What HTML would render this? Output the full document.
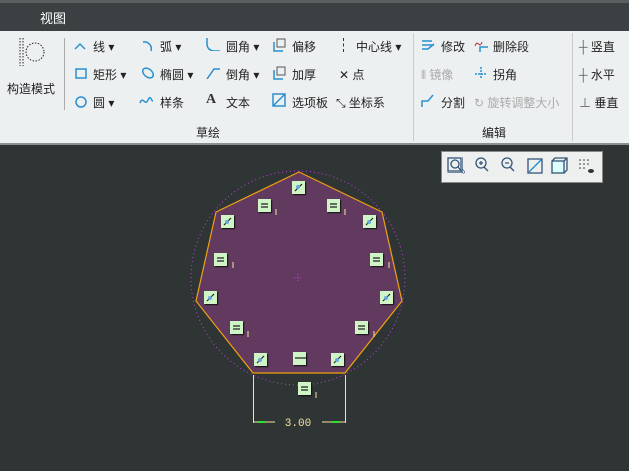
<!DOCTYPE html><html><head><meta charset="utf-8"><style>
body{margin:0;width:629px;height:471px;overflow:hidden;background:#2f3434;font-family:"Liberation Sans","Noto Sans CJK SC",sans-serif;position:relative}
.a{position:absolute;white-space:nowrap}
.t{font-size:12px;color:#222}
.g{color:#aaa}
.ic{position:absolute;width:14px;height:14px}
.m{position:absolute;width:13px;height:13px;background:#cff5c6;box-shadow:1px 1px 1px #111}
</style></head><body>
<div class="a" style="left:0;top:0;width:629px;height:3px;background:#5a5f60"></div>
<div class="a" style="left:0;top:3px;width:629px;height:28px;background:#3b4142"></div>
<div class="a" style="left:40px;top:8px;font-size:13px;color:#fff">视图</div>
<div class="a" style="left:0;top:31px;width:629px;height:112px;background:#edf0f1;border-bottom:2px solid #8a8f90"></div>
<svg class="a" style="left:18px;top:37px" width="30" height="30"><g fill="none" stroke="#222" stroke-dasharray="1.5 1.5"><line x1="2" y1="1" x2="2" y2="29"/><line x1="5" y1="1" x2="5" y2="29"/><circle cx="17" cy="15" r="9"/></g></svg>
<div class="a t" style="left:7px;top:80px">构造模式</div>
<div class="a" style="left:64px;top:38px;width:1px;height:72px;background:#aaa"></div>
<div class="a" style="left:413px;top:33px;width:1px;height:108px;background:#ccc"></div>
<div class="a" style="left:572px;top:33px;width:1px;height:108px;background:#ccc"></div>
<!-- col1 -->
<svg class="ic" style="left:74px;top:39px"><path d="M1 10l5-5 5 5" stroke="#2a8fd0" stroke-width="1.5" fill="none"/></svg><div class="a t" style="left:93px;top:38px">线 ▾</div>
<svg class="ic" style="left:74px;top:66px"><rect x="2" y="3" width="10" height="9" stroke="#2a8fd0" stroke-width="1.5" fill="none"/></svg><div class="a t" style="left:93px;top:66px">矩形 ▾</div>
<svg class="ic" style="left:74px;top:94px"><circle cx="7" cy="8" r="5" stroke="#2a8fd0" stroke-width="1.5" fill="none"/></svg><div class="a t" style="left:93px;top:94px">圆 ▾</div>
<svg class="ic" style="left:141px;top:39px"><path d="M2 3a7 7 0 0 1 8 9" stroke="#2a8fd0" stroke-width="1.5" fill="none"/></svg><div class="a t" style="left:160px;top:38px">弧 ▾</div>
<svg class="ic" style="left:141px;top:66px"><ellipse cx="7" cy="7" rx="6" ry="4" transform="rotate(40 7 7)" stroke="#2a8fd0" stroke-width="1.5" fill="none"/></svg><div class="a t" style="left:160px;top:66px">椭圆 ▾</div>
<svg class="ic" style="left:139px;top:94px"><path d="M1 9c3-8 5 4 8-3s4 4 5 0" stroke="#2a8fd0" stroke-width="1.5" fill="none"/></svg><div class="a t" style="left:160px;top:94px">样条</div>
<svg class="ic" style="left:206px;top:37px"><path d="M1 1v6a7 7 0 0 0 7 7h6" stroke="#2a8fd0" stroke-width="1.5" fill="none"/></svg><div class="a t" style="left:226px;top:38px">圆角 ▾</div>
<svg class="ic" style="left:206px;top:65px"><path d="M1 14l7-10h6" stroke="#2a8fd0" stroke-width="1.5" fill="none"/></svg><div class="a t" style="left:226px;top:66px">倒角 ▾</div>
<div class="a" style="left:206px;top:92px;font:bold 14px 'Liberation Serif',serif;color:#333">A</div><div class="a t" style="left:226px;top:94px">文本</div>
<svg class="ic" style="left:272px;top:38px"><path d="M2 4v9h9" stroke="#2a8fd0" stroke-width="1.5" fill="none"/><rect x="5" y="1" width="8" height="8" stroke="#555" fill="none"/></svg><div class="a t" style="left:292px;top:38px">偏移</div>
<svg class="ic" style="left:272px;top:66px"><path d="M2 4v9h9" stroke="#2a8fd0" stroke-width="1.5" fill="none"/><rect x="5" y="1" width="8" height="8" stroke="#555" fill="none"/></svg><div class="a t" style="left:292px;top:66px">加厚</div>
<svg class="ic" style="left:272px;top:93px"><rect x="1" y="1" width="12" height="12" stroke="#2a8fd0" stroke-width="1.5" fill="none"/><path d="M1 13L13 1" stroke="#2a8fd0" stroke-width="1.5"/></svg><div class="a t" style="left:292px;top:94px">选项板</div>
<div class="a" style="left:343px;top:38px;width:1px;height:14px;border-left:1px dashed #333"></div><div class="a t" style="left:356px;top:38px">中心线 ▾</div>
<div class="a t" style="left:339px;top:66px">✕ 点</div>
<div class="a t" style="left:336px;top:94px">⤡ 坐标系</div>
<div class="a t" style="left:196px;top:124px">草绘</div>
<!-- edit -->
<svg class="ic" style="left:421px;top:38px"><path d="M1 3h10M1 7h12M1 11h6l6-5" stroke="#2a8fd0" stroke-width="1.5" fill="none"/></svg><div class="a t" style="left:441px;top:38px">修改</div>
<div class="a t g" style="left:421px;top:66px">⫴ 镜像</div>
<svg class="ic" style="left:421px;top:93px"><path d="M1 14V8h6l5-6" stroke="#2a8fd0" stroke-width="1.5" fill="none"/></svg><div class="a t" style="left:441px;top:94px">分割</div>
<svg class="ic" style="left:474px;top:38px"><path d="M1 8c3-8 4 4 7-4" stroke="#a33" fill="none"/><path d="M6 14V9h8" stroke="#2a8fd0" stroke-width="1.5" fill="none"/></svg><div class="a t" style="left:493px;top:38px">删除段</div>
<svg class="ic" style="left:474px;top:66px"><path d="M7 1v12M1 8h12" stroke="#2a8fd0" stroke-width="1.5" stroke-dasharray="2 1" fill="none"/></svg><div class="a t" style="left:493px;top:66px">拐角</div>
<div class="a t g" style="left:474px;top:94px">↻ 旋转调整大小</div>
<div class="a t" style="left:482px;top:124px">编辑</div>
<div class="a t" style="left:579px;top:38px"><span style="color:#666">┼</span> 竖直</div>
<div class="a t" style="left:579px;top:66px"><span style="color:#666">┼</span> 水平</div>
<div class="a t" style="left:579px;top:94px"><span style="color:#666">⊥</span> 垂直</div>
<!-- view toolbar -->
<div class="a" style="left:441px;top:151px;width:160px;height:30px;background:#eef0f0;border:1px solid #888"></div>
<div class="a" style="left:449px;top:158px;font-size:14px;color:#246">🔍︎</div>
<svg class="a" style="left:446px;top:156px" width="150" height="20"><g stroke="#357" fill="none" stroke-width="1.3"><rect x="2" y="2" width="14" height="14"/><circle cx="9" cy="8" r="4"/><circle cx="35" cy="7" r="5"/><path d="M38 11l4 4M33 7h4M35 5v4"/><circle cx="61" cy="7" r="5"/><path d="M64 11l4 4M59 7h4"/><rect x="82" y="3" width="14" height="14"/><path d="M83 16l12-12" stroke="#28c"/><rect x="106" y="5" width="12" height="12" fill="#dff"/><path d="M106 5l3-3h12v12l-3 3M118 5l3-3"/></g><g fill="#333"><circle cx="134" cy="4" r=".8"/><circle cx="138" cy="4" r=".8"/><circle cx="142" cy="4" r=".8"/><circle cx="134" cy="8" r=".8"/><circle cx="138" cy="8" r=".8"/><circle cx="142" cy="8" r=".8"/><circle cx="134" cy="12" r=".8"/><circle cx="138" cy="12" r=".8"/><ellipse cx="145" cy="15" rx="3" ry="2"/></g></svg>
<div class="a" style="left:446px;top:156px;width:16px;height:16px;background:#eef0f0"></div>
<svg class="a" style="left:446px;top:156px" width="18" height="20"><g stroke="#357" fill="none" stroke-width="1.3"><rect x="2" y="2" width="13" height="13"/><circle cx="9" cy="8" r="4"/><path d="M12 11l4 5"/></g></svg>
<!-- sketch -->
<svg class="a" style="left:0;top:143px" width="629" height="328">
<g transform="translate(0,-143)">
<circle cx="298" cy="278" r="107" fill="none" stroke="#c040e0" stroke-width="1" stroke-dasharray="1 3"/>
<polygon points="299,172 382,212 402,301 345,373 253,373 196,301 216,212" fill="#623a60" stroke="#f0a010" stroke-width="1.2"/>
<g fill="none" stroke="#f4e4a0" stroke-width="1"><path d="M253.5 375v48M345.5 375v48M253 422h22M322 422h23"/></g>
<path d="M257 422h8M332 422h8" stroke="#3d3" stroke-width="2"/>
<text x="298" y="426" fill="#f4e4a0" font-family="Liberation Mono" font-size="11" text-anchor="middle">3.00</text>
<g stroke="#f4e4a0"><path d="M276 209v6M345 209v6M233 262v6M389 262v6M248 331v6M374 331v6M316 392v6"/></g>
<g stroke="#c040e0"><path d="M298 274v8M294 278h8" stroke-dasharray="1 2"/></g>
</g></svg>
<div class="m" style="left:292px;top:181px"></div><div class="m" style="left:221px;top:215px"></div><div class="m" style="left:363px;top:215px"></div><div class="m" style="left:204px;top:291px"></div><div class="m" style="left:380px;top:291px"></div><div class="m" style="left:254px;top:353px"></div><div class="m" style="left:331px;top:353px"></div>
<div class="m" style="left:258px;top:199px"></div><div class="m" style="left:327px;top:199px"></div><div class="m" style="left:214px;top:253px"></div><div class="m" style="left:370px;top:253px"></div><div class="m" style="left:230px;top:321px"></div><div class="m" style="left:355px;top:321px"></div><div class="m" style="left:298px;top:382px"></div><div class="m" style="left:293px;top:352px"></div>
<svg class="a" style="left:0;top:0" width="629" height="471"><g stroke="#222" stroke-width="1.2">
<g id="d"><path d="M295 191l7-7"/></g><path d="M224 225l7-7M366 225l7-7M207 301l7-7M383 301l7-7M257 363l7-7M334 363l7-7"/>
<path d="M261 204h7M261 207h7M330 204h7M330 207h7M217 258h7M217 261h7M373 258h7M373 261h7M233 326h7M233 329h7M358 326h7M358 329h7M301 387h7M301 390h7M295 358h11"/></g>
<g fill="#6ad"><circle cx="298" cy="187" r="2"/><circle cx="227" cy="222" r="2"/><circle cx="369" cy="222" r="2"/><circle cx="210" cy="298" r="2"/><circle cx="386" cy="298" r="2"/><circle cx="260" cy="360" r="2"/><circle cx="337" cy="360" r="2"/></g></svg>
</body></html>
